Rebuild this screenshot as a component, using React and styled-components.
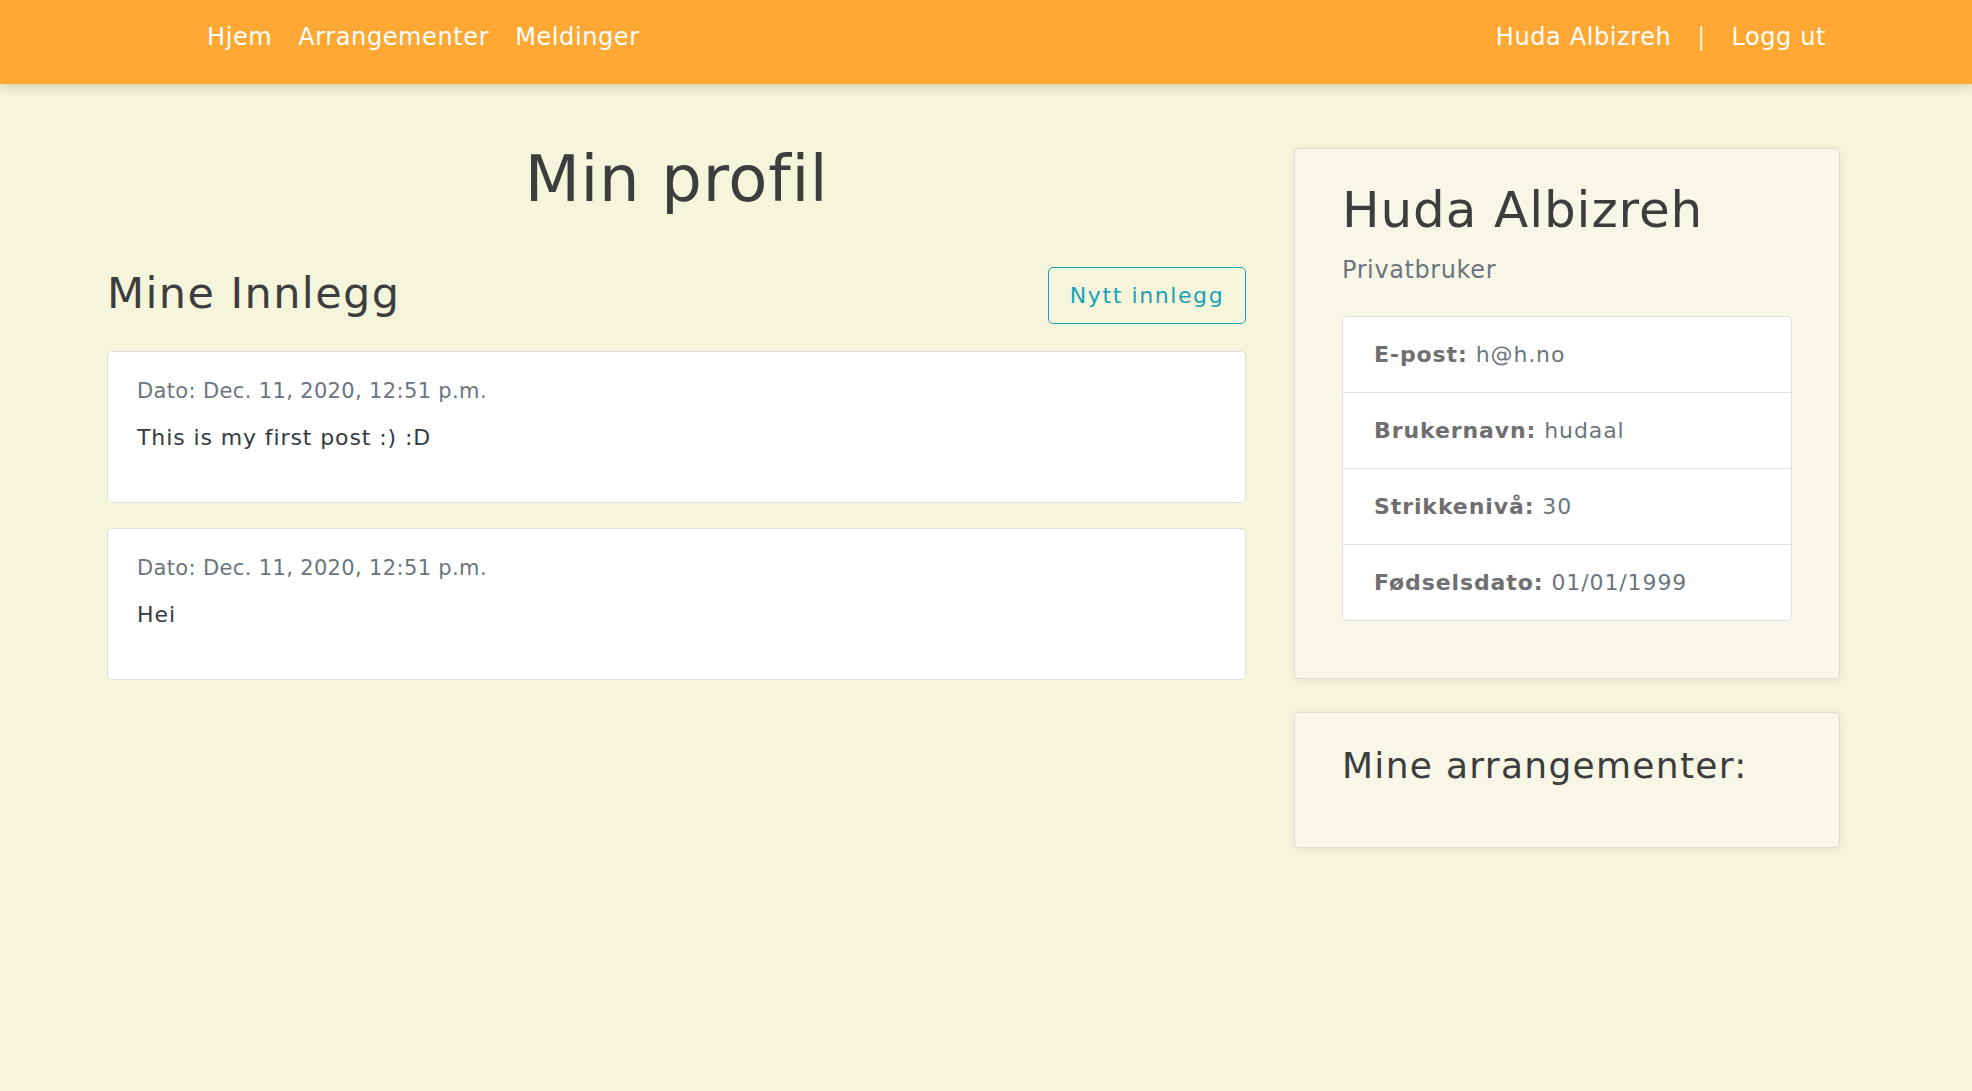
import React from "react";
import styled, { createGlobalStyle } from "styled-components";

const GlobalStyle = createGlobalStyle`
  body {
    margin: 0;
    background: #f5f5dc;
    font-family: "DejaVu Sans", "Open Sans", sans-serif;
    color: #3f3f3f;
  }
  * { box-sizing: border-box; }
`;

const posts = [
  { date: "Dato: Dec. 11, 2020, 12:51 p.m.", text: "This is my first post :) :D" },
  { date: "Dato: Dec. 11, 2020, 12:51 p.m.", text: "Hei" },
];

const info = [
  { label: "E-post:", value: "h@h.no" },
  { label: "Brukernavn:", value: "hudaal" },
  { label: "Strikkenivå:", value: "30" },
  { label: "Fødselsdato:", value: "01/01/1999" },
];

export default function App() {
  return (
    <>
      <GlobalStyle />
      <Navbar>
        <NavGroup>
          <NavLink>Hjem</NavLink>
          <NavLink>Arrangementer</NavLink>
          <NavLink>Meldinger</NavLink>
        </NavGroup>
        <NavGroup>
          <NavLink>Huda Albizreh</NavLink>
          <Divider>|</Divider>
          <NavLink>Logg ut</NavLink>
        </NavGroup>
      </Navbar>

      <Main>
        <LeftColumn>
          <PageTitle>Min profil</PageTitle>
          <SectionHeader>
            <SectionTitle>Mine Innlegg</SectionTitle>
            <OutlineButton>Nytt innlegg</OutlineButton>
          </SectionHeader>
          <PostList>
            {posts.map((p, i) => (
              <PostCard key={i}>
                <PostDate>{p.date}</PostDate>
                <PostText>{p.text}</PostText>
              </PostCard>
            ))}
          </PostList>
        </LeftColumn>

        <RightColumn>
          <SideCard>
            <ProfileName>Huda Albizreh</ProfileName>
            <ProfileType>Privatbruker</ProfileType>
            <InfoList>
              {info.map((row) => (
                <InfoItem key={row.label}>
                  <strong>{row.label}</strong> {row.value}
                </InfoItem>
              ))}
            </InfoList>
          </SideCard>
          <SideCard $compact>
            <SideTitle>Mine arrangementer:</SideTitle>
          </SideCard>
        </RightColumn>
      </Main>
    </>
  );
}

// ===== Styles =====

const Navbar = styled.nav`
  height: 84px;
  background: #ffa834;
  display: flex;
  justify-content: space-between;
  align-items: center;
  padding: 0 146px 9px 207px;
  box-shadow: 0 3px 10px rgba(120, 100, 40, 0.25);
  position: relative;
`;

const NavGroup = styled.div`
  display: flex;
  align-items: center;
  gap: 26px;
`;

const NavLink = styled.a`
  color: #fff;
  font-size: 24px;
  letter-spacing: 0.6px;
  line-height: 1.2;
  cursor: pointer;
`;

const Divider = styled.span`
  color: #fff3c0;
  font-size: 24px;
`;

const Main = styled.main`
  display: flex;
  align-items: flex-start;
  gap: 48px;
  padding: 64px 132px 40px 107px;
`;

const LeftColumn = styled.section`
  width: 1139px;
  display: flex;
  flex-direction: column;
`;

const RightColumn = styled.aside`
  width: 546px;
  display: flex;
  flex-direction: column;
  gap: 33px;
`;

const PageTitle = styled.h1`
  margin: 2px 0 0;
  text-align: center;
  font-size: 64px;
  font-weight: 400;
  letter-spacing: 0.7px;
  line-height: 58px;
  color: #3d3d3d;
`;

const SectionHeader = styled.div`
  margin-top: 59px;
  height: 57px;
  display: flex;
  align-items: center;
  justify-content: space-between;
`;

const SectionTitle = styled.h2`
  margin: 0 0 6px;
  font-size: 43px;
  font-weight: 400;
  letter-spacing: 1.4px;
  color: #3d3d3d;
`;

const OutlineButton = styled.button`
  width: 198px;
  height: 57px;
  border: 1px solid #17a2b8;
  border-radius: 5px;
  background: transparent;
  color: #17a2b8;
  font-family: inherit;
  font-size: 22px;
  letter-spacing: 1.6px;
  cursor: pointer;
`;

const PostList = styled.div`
  margin-top: 27px;
  display: flex;
  flex-direction: column;
  gap: 25px;
`;

const PostCard = styled.div`
  height: 152px;
  background: #fff;
  border: 1px solid rgba(0, 0, 0, 0.125);
  border-radius: 5px;
  padding: 24px 29px;
`;

const PostDate = styled.div`
  font-size: 21px;
  letter-spacing: 0.35px;
  line-height: 30px;
  color: #6c757d;
`;

const PostText = styled.p`
  margin: 17px 0 0;
  font-size: 22px;
  letter-spacing: 0.9px;
  line-height: 30px;
  color: #343a40;
`;

const SideCard = styled.div`
  background: #f8f7e7;
  border: 1px solid rgba(0, 0, 0, 0.1);
  border-radius: 5px;
  box-shadow: 0 2px 10px rgba(120, 110, 60, 0.12);
  padding: ${(p) => (p.$compact ? "31px 47px 47px" : "31px 47px 57px")};
`;

const ProfileName = styled.h1`
  margin: 0;
  font-size: 50px;
  font-weight: 400;
  letter-spacing: 0.9px;
  line-height: 60px;
  color: #3d3d3d;
`;

const ProfileType = styled.p`
  margin: 11px 0 0;
  font-size: 24px;
  letter-spacing: 0.6px;
  line-height: 38px;
  color: #6c757d;
`;

const InfoList = styled.ul`
  list-style: none;
  margin: 27px 0 0;
  padding: 0;
  background: #fff;
  border: 1px solid rgba(0, 0, 0, 0.125);
  border-radius: 5px;
  overflow: hidden;
`;

const InfoItem = styled.li`
  padding: 23px 31px;
  font-size: 22px;
  letter-spacing: 0.9px;
  line-height: 29px;
  color: #6c757d;
  & + & {
    border-top: 1px solid rgba(0, 0, 0, 0.125);
  }
  strong {
    font-weight: 700;
    color: #6f6f6f;
  }
`;

const SideTitle = styled.h3`
  margin: 0 0 13px;
  font-size: 36px;
  font-weight: 400;
  letter-spacing: 1.3px;
  line-height: 43px;
  color: #3d3d3d;
`;
